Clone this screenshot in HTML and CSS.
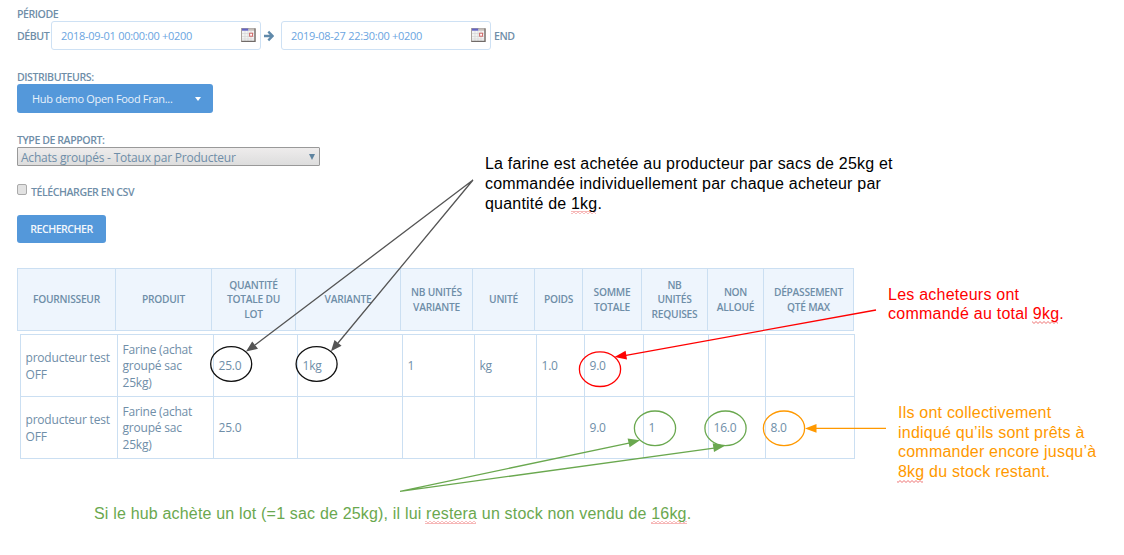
FILE: index.html
```html
<!DOCTYPE html>
<html lang="fr">
<head>
<meta charset="utf-8">
<title>Achats groupés</title>
<link rel="stylesheet" href="styles.css">
</head>
<body>
<main class="page">
  <form class="filters">
    <div class="label period-title"><span>PÉRIODE</span></div>
    <div class="period">
      <span class="label start">DÉBUT</span>
      <div class="date"><span>2018-09-01 00:00:00 +0200</span>
        <svg class="cal" viewBox="0 0 15 14"><use href="#calendar"/></svg></div>
      <svg class="arrow" viewBox="0 0 10 12"><path d="M0 6H8M4.3 1.6L8.6 6L4.3 10.4" fill="none" stroke="#5f89aa" stroke-width="2.3"/></svg>
      <div class="date"><span>2019-08-27 22:30:00 +0200</span>
        <svg class="cal" viewBox="0 0 15 14"><use href="#calendar"/></svg></div>
      <span class="label end">END</span>
    </div>
    <div class="label distributors"><span>DISTRIBUTEURS:</span></div>
    <div class="hub"><span>Hub demo Open Food Fran...</span><i class="caret"></i></div>
    <div class="label report"><span>TYPE DE RAPPORT:</span></div>
    <div class="select"><span>Achats groupés - Totaux par Producteur</span><i class="select-arrow"></i></div>
    <div class="csv"><i class="box"></i><span class="label">TÉLÉCHARGER EN CSV</span></div>
    <div class="search"><span>RECHERCHER</span></div>
  </form>

  <section class="table">
    <div class="head">
      <div>FOURNISSEUR</div><div>PRODUIT</div><div>QUANTITÉ<br>TOTALE DU<br>LOT</div><div>VARIANTE</div><div>NB UNITÉS<br>VARIANTE</div><div>UNITÉ</div><div>POIDS</div><div>SOMME<br>TOTALE</div><div>NB<br>UNITÉS<br>REQUISES</div><div>NON<br>ALLOUÉ</div><div>DÉPASSEMENT<br>QTÉ MAX</div>
    </div>
    <div class="body">
      <div class="row">
        <div>producteur test<br>OFF</div><div>Farine (achat<br>groupé sac<br>25kg)</div><div>25.0</div><div>1kg</div><div>1</div><div>kg</div><div>1.0</div><div>9.0</div><div></div><div></div><div></div>
      </div>
      <div class="row">
        <div>producteur test<br>OFF</div><div>Farine (achat<br>groupé sac<br>25kg)</div><div>25.0</div><div></div><div></div><div></div><div></div><div>9.0</div><div>1</div><div>16.0</div><div>8.0</div>
      </div>
    </div>
  </section>

  <svg class="marks" width="1124" height="555" viewBox="0 0 1124 555">
    <defs>
      <symbol id="calendar" viewBox="0 0 15 14">
        <rect x=".5" y=".5" width="13.5" height="13" fill="#f3f3f3" stroke="#aaa29d"/>
        <path d="M1 5.5H14M1 8.5H14M1 11H14M4 3V13M7 3V13M10 3V13" stroke="#d5d5d5" stroke-width=".7"/>
        <path d="M1 1.6H7.5" stroke="#6464c4" stroke-width="2.2"/>
        <path d="M7.5 1.6H14" stroke="#c3bdb8" stroke-width="2.2"/>
        <path d="M14 .5V13.4H.5" fill="none" stroke="#716b68" stroke-width="1.2"/>
        <rect x="8.6" y="5.2" width="3" height="3" fill="#fff" stroke="#cf6665"/>
      </symbol>
      <pattern id="wave" width="4" height="3" patternUnits="userSpaceOnUse">
        <path d="M-1 1.5L0 .5L2 2.5L4 .5L5 1.5" fill="none" stroke="#e94b4b" stroke-width=".8"/>
      </pattern>
    </defs>
    <g fill="none" stroke-width="1.3">
      <g stroke="#111">
        <ellipse cx="231.2" cy="364" rx="20.5" ry="17.3"/>
        <ellipse cx="316.6" cy="364" rx="20.5" ry="17.3"/>
      </g>
      <ellipse cx="600" cy="369.2" rx="20.6" ry="17.3" stroke="#f00"/>
      <g stroke="#6aa84f">
        <ellipse cx="655" cy="428.3" rx="20.6" ry="17.3"/>
        <ellipse cx="725.5" cy="428.3" rx="20.6" ry="17.3"/>
        <path d="M400 491.3L630 442.8M400 491.3L714 448.2"/>
      </g>
      <ellipse cx="784" cy="428.3" rx="20.6" ry="17.3" stroke="#ff9900"/>
      <path d="M473 180L255 345M473 180L338 343" stroke="#555"/>
      <path d="M876 310L626 355.3" stroke="#f00"/>
      <path d="M886 428.4H815" stroke="#ff9900"/>
    </g>
    <path d="M246 351.5L252.2 341.6L258 348.8Z M331 351.3L334.5 340L341.6 345.8Z" fill="#555"/>
    <path d="M614.5 357L625.6 350.8L627 359.6Z" fill="#f00"/>
    <path d="M640 440.3L627.6 438.5L629.6 447.3Z M725 445.8L712.7 443.2L714 452Z" fill="#6aa84f"/>
    <path d="M805 428.4L816.5 424V432.8Z" fill="#ff9900"/>
    <g>
      <rect class="wave" x="571" y="211" width="25" height="3"/>
      <rect class="wave" x="1032" y="321" width="26" height="3"/>
      <rect class="wave" x="897" y="480" width="26" height="3"/>
      <rect class="wave" x="425" y="521" width="51" height="3"/>
      <rect class="wave" x="651" y="521" width="36" height="3"/>
    </g>
  </svg>
  <p class="note note-black">La farine est achetée au producteur par sacs de 25kg et<br>commandée individuellement par chaque acheteur par<br>quantité de 1kg.</p>
  <p class="note note-red">Les acheteurs ont<br>commandé au total 9kg.</p>
  <p class="note note-orange">Ils ont collectivement<br>indiqué qu’ils sont prêts à<br>commander encore jusqu’à<br>8kg du stock restant.</p>
  <p class="note note-green">Si le hub achète un lot (=1 sac de 25kg), il lui restera un stock non vendu de 16kg.</p>
</main>
</body>
</html>
```
FILE: styles.css
```css
* { box-sizing: border-box; }
body { margin: 0; background: #fff; }
.page {
  position: relative;
  width: 1124px;
  height: 555px;
  overflow: hidden;
  padding: 7px 0 0 17px;
  font-family: "Open Sans", sans-serif;
  color: #6f8ea8;
}
.filters { display: flex; flex-direction: column; align-items: flex-start; }
.label { font-size: 10.6px; line-height: 14px; font-weight: 600; letter-spacing: -0.45px; white-space: nowrap; }
.period { display: flex; align-items: center; height: 29px; }
.start { width: 34px; }
.date {
  display: flex;
  align-items: center;
  justify-content: space-between;
  width: 210px;
  height: 29px;
  padding: 0 4px 1px 9px;
  border: 1px solid #cee1f4;
  border-radius: 3px;
  font-size: 11px;
  letter-spacing: -0.28px;
  color: #6ba5df;
  white-space: nowrap;
}
.cal { width: 15px; height: 14px; }
.arrow { width: 10px; height: 12px; margin: 0 7px 0 3px; }
.end { margin-left: 3px; }
.distributors { margin-top: 20px; }
.hub {
  display: flex;
  align-items: center;
  justify-content: space-between;
  width: 196px;
  height: 29px;
  padding: 0 12px 0 15px;
  border-radius: 3px;
  background: #5498da;
  color: #e9f2fb;
  font-size: 11px;
  letter-spacing: -0.3px;
}
.caret { border: 3.5px solid transparent; border-top: 4px solid #fff; border-bottom: 0; }
.report { margin-top: 20px; }
.select {
  display: flex;
  align-items: center;
  justify-content: space-between;
  width: 303px;
  height: 19px;
  padding: 1px 4px 0 3px;
  border: 1px solid #999;
  border-radius: 1px;
  background: linear-gradient(#eeecec, #dddddd);
  font-size: 12px;
  letter-spacing: -0.22px;
  white-space: nowrap;
}
.select-arrow { border: 3px solid transparent; border-top: 6px solid #5f84a0; border-bottom: 0; }
.csv { display: flex; align-items: center; gap: 4px; height: 14px; margin-top: 18px; }
.csv .label { padding-top: 1px; }
.box { width: 10px; height: 11px; margin-top: -4px; border: 1px solid #aaa; border-radius: 2px; background: #e2e2e2; }
.search {
  display: flex;
  align-items: center;
  justify-content: center;
  width: 89px;
  height: 28px;
  margin-top: 17px;
  border-radius: 3px;
  background: #5498da;
  color: #f2f7fc;
  font-size: 10.6px;
  font-weight: 600;
  letter-spacing: -0.5px;
}
.table { margin-top: 25px; }
.head {
  display: grid;
  grid-template-columns: 98px 96px 84px 105px 72px 62px 48px 59px 66px 56px 89px;
  width: 837px;
  height: 63px;
  border: 1px solid #cbdff2;
  background: #eef5fd;
  font-size: 10.2px;
  line-height: 14.3px;
  font-weight: 600;
  letter-spacing: -0.25px;
  text-align: center;
}
.head div { display: flex; align-items: center; justify-content: center; border-right: 1px solid #cbdff2; white-space: nowrap; }
.head div:last-child, .row div:last-child { border-right: 0; }
.body { width: 835px; margin: 3px 0 0 3px; border: 1px solid #cbdff2; }
.row {
  display: grid;
  grid-template-columns: 97px 96px 84px 105px 72px 62px 48px 59px 65px 57px 88px;
  height: 61px;
  font-size: 12px;
  line-height: 16.3px;
  letter-spacing: -0.2px;
}
.row + .row { height: 62px; border-top: 1px solid #cbdff2; }
.row div { display: flex; align-items: center; padding: 2px 0 0 4.5px; border-right: 1px solid #cbdff2; white-space: nowrap; }
.marks { position: absolute; left: 0; top: 0; }
.wave { fill: url(#wave); }
.note {
  position: absolute;
  margin: 0;
  font: 16px/20px "Liberation Sans", Arial, sans-serif;
  letter-spacing: 0.2px;
  white-space: nowrap;
}
.note-black { left: 485px; top: 154px; line-height: 20.2px; color: #000; }
.note-red { left: 888px; top: 285px; line-height: 19.4px; letter-spacing: 0.24px; color: #f00; }
.note-orange { left: 898px; top: 403px; line-height: 19.6px; letter-spacing: 0.22px; color: #ff9900; }
.note-green { left: 94px; top: 504px; letter-spacing: 0.18px; color: #6aa84f; }
```
